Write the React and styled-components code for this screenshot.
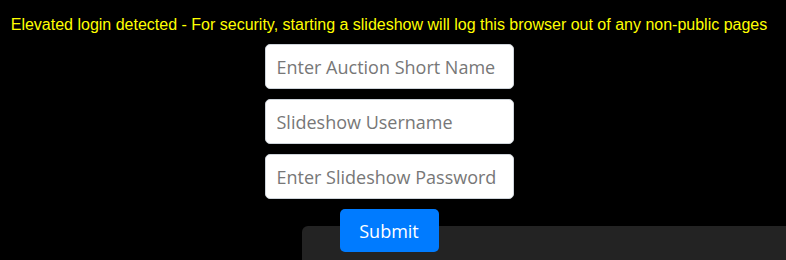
import React from "react";
import styled, { createGlobalStyle } from "styled-components";

const GlobalStyle = createGlobalStyle`
  html, body {
    margin: 0;
    padding: 0;
    background: #000;
    overflow: hidden;
  }
`;

const Page = styled.div`
  display: flex;
  flex-direction: column;
  align-items: center;
  padding-top: 16px;
  padding-right: 8px;
  height: 260px;
  box-sizing: border-box;
`;

const Warning = styled.p`
  margin: 0 0 10px;
  color: #ffff00;
  font-family: "Liberation Sans", Arial, sans-serif;
  font-size: 16px;
  line-height: 18px;
  text-align: center;
  white-space: nowrap;
`;

const Form = styled.form`
  display: flex;
  flex-direction: column;
  align-items: center;
  gap: 10px;
  position: relative;
  z-index: 1;
`;

const Field = styled.input`
  width: 249px;
  height: 45px;
  box-sizing: border-box;
  padding: 0 11px;
  border: 1px solid #ced4da;
  border-radius: 5px;
  background: #fff;
  font-family: "Open Sans", "Noto Sans", sans-serif;
  font-size: 18px;
  color: #495057;
  outline: none;

  &::placeholder {
    color: #777;
  }
`;

const SubmitButton = styled.button`
  width: 99px;
  height: 43px;
  border: none;
  border-radius: 5px;
  background: #007bff;
  color: #fff;
  font-family: "Open Sans", "Noto Sans", sans-serif;
  font-size: 18px;
  cursor: pointer;
`;

const Panel = styled.div`
  position: absolute;
  left: 302px;
  top: 226px;
  right: 0;
  bottom: 0;
  background: #232323;
  border-top-left-radius: 6px;
`;

export default function App() {
  return (
    <>
      <GlobalStyle />
      <Page>
        <Warning>
          Elevated login detected - For security, starting a slideshow will log
          this browser out of any non-public pages
        </Warning>
        <Form onSubmit={(e) => e.preventDefault()}>
          <Field type="text" placeholder="Enter Auction Short Name" />
          <Field type="text" placeholder="Slideshow Username" />
          <Field type="password" placeholder="Enter Slideshow Password" />
          <SubmitButton type="submit">Submit</SubmitButton>
        </Form>
      </Page>
      <Panel />
    </>
  );
}
